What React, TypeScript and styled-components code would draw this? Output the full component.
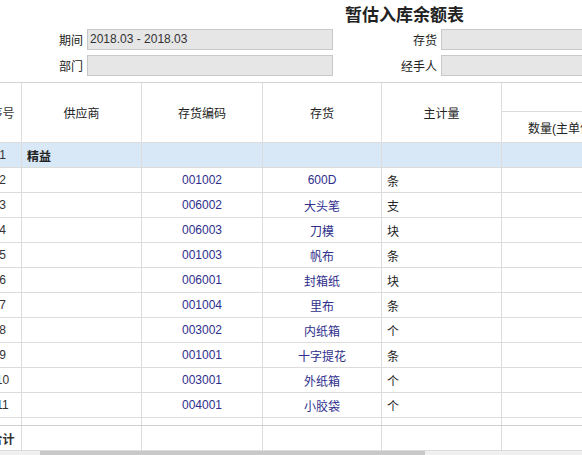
import React from "react";
import styled, { createGlobalStyle } from "styled-components";

const G = createGlobalStyle`
  html,body{margin:0;padding:0;background:#fff;overflow:hidden;}
  body{font-family:"Liberation Sans","Noto Sans CJK SC",sans-serif;font-size:12px;color:#222;width:582px;height:455px;}
`;
const Page = styled.div`width:582px;height:455px;overflow:hidden;position:relative;`;
const Title = styled.div`height:26px;display:flex;justify-content:flex-start;padding-left:345px;align-items:center;font-size:17px;font-weight:bold;font-family:"Noto Sans CJK SC",sans-serif;color:#222;`;
const Filters = styled.div`display:grid;grid-template-columns:83px 246px 100px 145px;column-gap:4px;row-gap:5px;margin-top:3px;`;
const Label = styled.div`text-align:right;height:21px;line-height:21px;font-family:"Noto Sans CJK SC",sans-serif;`;
const Input = styled.div<{ $mr?: number }>`height:19px;line-height:19px;border:1px solid #c8c8c8;background:#e6e6e6;padding-left:2px;color:#333;margin-right:${p=>p.$mr||0}px;`;
const Table = styled.div`margin-top:6px;margin-left:-16px;border-top:1px solid #d4d4d4;`;
const cols = "38px 120px 121px 119px 120px 120px";
const Row = styled.div<{ $h: number; $bg?: string }>`display:grid;grid-template-columns:${cols};height:${p=>p.$h}px;background:${p=>p.$bg||"#fff"};border-bottom:1px solid #dcdcdc;box-sizing:border-box;`;
const Cell = styled.div<{ $align?: string; $color?: string; $bold?: boolean }>`border-right:1px solid #dcdcdc;display:flex;align-items:center;justify-content:${p=>p.$align||"flex-start"};padding:0 5px;color:${p=>p.$color||"#222"};font-weight:${p=>p.$bold?"bold":"normal"};font-family:"Liberation Sans","Noto Sans CJK SC",sans-serif;overflow:hidden;white-space:nowrap;`;
const NumCell = styled.div<{ $bold?: boolean }>`border-right:1px solid #dcdcdc;display:flex;align-items:center;justify-content:center;color:#333;font-weight:${p=>p.$bold?"bold":"normal"};white-space:nowrap;overflow:visible;`;
const HeadSplit = styled.div`border-right:1px solid #dcdcdc;display:grid;grid-template-rows:29px 1fr;`;
const SubTop = styled.div`border-bottom:1px solid #dcdcdc;`;
const SubBot = styled.div`display:flex;align-items:center;padding-left:26px;white-space:nowrap;`;
const Gap = styled.div`height:7px;display:grid;grid-template-columns:${cols};border-bottom:1px solid #cfcfcf;`;
const GapCell = styled.div`border-right:1px solid #dcdcdc;`;
const Scroll = styled.div`height:6px;background:#f0f0f0;padding-left:40px;`;
const Thumb = styled.div`width:385px;height:5px;background:#c8c8c8;`;

const data = [
  ["001002","600D","条"],["006002","大头笔","支"],["006003","刀模","块"],["001003","帆布","条"],
  ["006001","封箱纸","块"],["001004","里布","条"],["003002","内纸箱","个"],["001001","十字提花","条"],
  ["003001","外纸箱","个"],["004001","小胶袋","个"],
];

export default function App(){
  return <Page><G/>
    <Title>暂估入库余额表</Title>
    <Filters>
      <Label>期间</Label><Input>2018.03 - 2018.03</Input><Label>存货</Label><Input $mr={-10}/>
      <Label>部门</Label><Input/><Label>经手人</Label><Input $mr={-10}/>
    </Filters>
    <Table>
      <Row $h={60}>
        <NumCell>序号</NumCell><Cell $align="center">供应商</Cell><Cell $align="center">存货编码</Cell>
        <Cell $align="center">存货</Cell><Cell $align="center">主计量</Cell>
        <HeadSplit><SubTop/><SubBot>数量(主单位)</SubBot></HeadSplit>
      </Row>
      <Row $h={25} $bg="#d9e8f7"><NumCell>1</NumCell><Cell $bold>精益</Cell><Cell/><Cell/><Cell/><Cell/></Row>
      {data.map((d,i)=>(
        <Row key={i} $h={25}>
          <NumCell>{i+2}</NumCell><Cell/>
          <Cell $align="center" $color="#2e2e8c">{d[0]}</Cell>
          <Cell $align="center" $color="#2e2e8c">{d[1]}</Cell>
          <Cell>{d[2]}</Cell><Cell/>
        </Row>
      ))}
      <Gap><GapCell/><GapCell/><GapCell/><GapCell/><GapCell/><GapCell/></Gap>
      <Row $h={25}><NumCell $bold>合计</NumCell><Cell/><Cell/><Cell/><Cell/><Cell/></Row>
    </Table>
    <Scroll><Thumb/></Scroll>
  </Page>;
}
